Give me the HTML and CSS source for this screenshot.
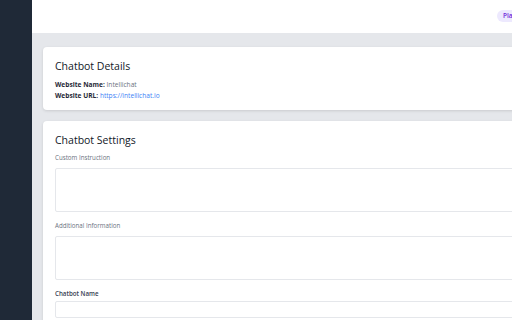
FILE: index.html
```html
<!DOCTYPE html>
<html lang="en">
<head>
    <meta charset="UTF-8">
    <meta name="viewport" content="width=device-width, initial-scale=1.0">
    <title>Chatbot</title>
    <link rel="stylesheet" href="styles.css">
</head>
<body>

<div class="layout">
    <aside class="sidebar"></aside>

    <div class="main">
        <header class="topbar">
            <span class="plan-badge">Plan: Free</span>
        </header>

        <div class="content">
            <div class="card">
                <h2>Chatbot Details</h2>
                <p class="info"><strong>Website Name:</strong> Intellichat</p>
                <p class="info"><strong>Website URL:</strong> <a href="#">https://intellichat.io</a></p>
            </div>

            <div class="card">
                <h2>Chatbot Settings</h2>
                <div class="form-group">
                    <label for="custom">Custom Instruction</label>
                    <textarea id="custom"></textarea>
                </div>
                <div class="form-group">
                    <label for="additional">Additional Information</label>
                    <textarea id="additional"></textarea>
                </div>
                <div class="form-group">
                    <label for="bot-name" class="strong">Chatbot Name</label>
                    <input type="text" id="bot-name" />
                </div>
            </div>
        </div>
    </div>
</div>

</body>
</html>
```

FILE: styles.css
```css
body {
    margin: 0;
    height: 100vh;
    overflow: hidden;
    font-family: "Open Sans", Arial, sans-serif;
    color: #1f2937;
    background: #e5e7eb;
}

.layout {
    display: flex;
    height: 100%;
}

.sidebar {
    flex: 0 0 32px;
    background-color: #1f2937;
}

.main {
    flex: 0 0 560px;
    display: flex;
    flex-direction: column;
}

.topbar {
    flex: none;
    height: 33px;
    background: #fff;
    display: flex;
    align-items: center;
    justify-content: flex-end;
    padding-right: 52px;
}

.plan-badge {
    background: #ede9fe;
    color: #6d28d9;
    font-size: 6.5px;
    line-height: 8px;
    font-weight: 600;
    padding: 2px 6px;
    border-radius: 999px;
    margin-bottom: 1px;
}

.content {
    flex: none;
    padding: 14px 11px;
    display: flex;
    flex-direction: column;
    gap: 11px;
}

.card {
    background: #fff;
    border-radius: 4px;
    box-shadow: 0 1px 3px rgba(0, 0, 0, 0.12);
    padding: 12px 12px 9px;
}

.card h2 {
    margin: 0 0 6px;
    font-size: 10.5px;
    line-height: 14px;
    font-weight: 400;
    color: #111827;
}

.info {
    margin: 0;
    font-size: 6.6px;
    line-height: 11px;
    color: #6b7280;
}

.info strong {
    color: #1f2937;
    font-weight: 700;
}

.info a {
    color: #3b82f6;
    text-decoration: none;
}

.form-group {
    margin-bottom: 9px;
}

label {
    display: block;
    font-size: 6.2px;
    line-height: 9px;
    color: #6b7280;
    margin-bottom: 6px;
}

label.strong {
    color: #374151;
    font-weight: 600;
    margin-bottom: 3px;
}

textarea,
input[type="text"] {
    display: block;
    width: 100%;
    box-sizing: border-box;
    border: 1px solid #e5e7eb;
    border-radius: 2px;
    background: #fff;
    resize: none;
    margin: 0;
}

textarea {
    height: 44px;
}

input[type="text"] {
    height: 17px;
}
```
